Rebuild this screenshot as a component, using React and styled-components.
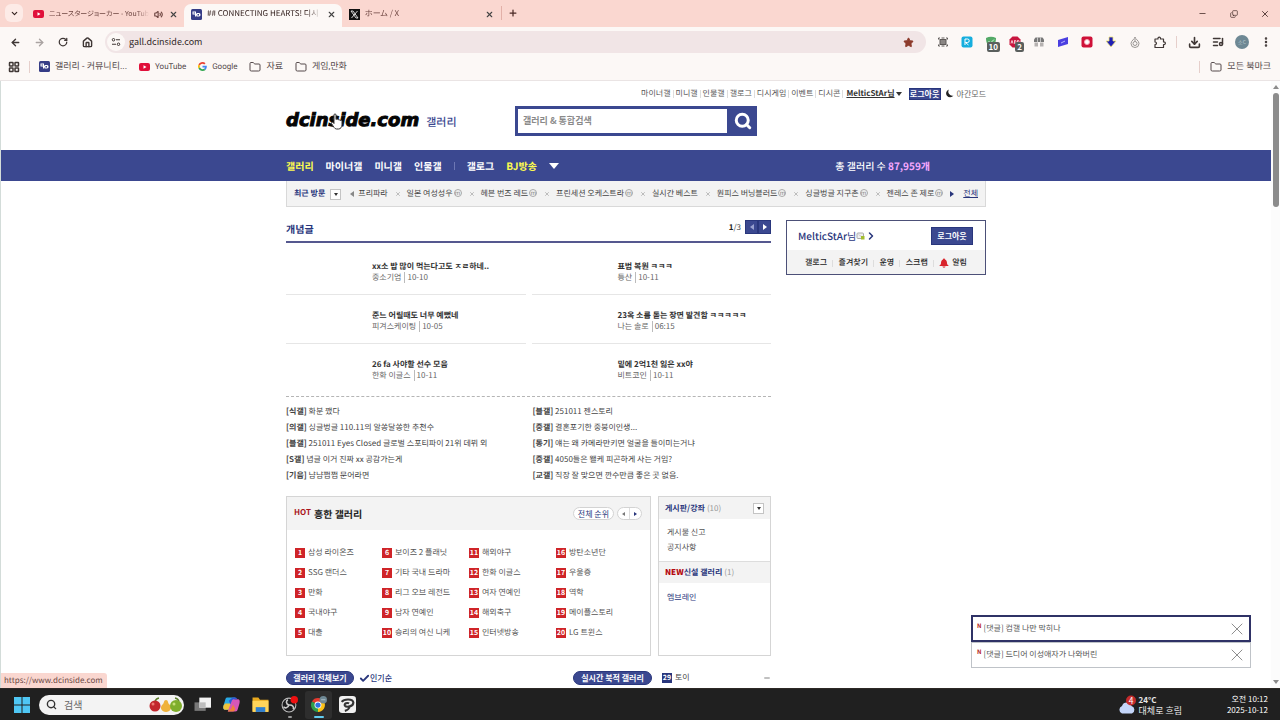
import React from "react";
import styled, { createGlobalStyle, css } from "styled-components";
import { ArrowLeft, ArrowRight, RotateCw, House, Star, Download, ListMusic, Folder, Search, X, Plus, Minus, ChevronDown, ChevronRight, Volume2, EllipsisVertical, Copy, LayoutGrid, Check } from "lucide-react";

const GlobalStyle = createGlobalStyle`
  * { box-sizing: border-box; }
  body { margin: 0; background: #fff; text-rendering: geometricPrecision; }
  body, button, input { font-family: "Noto Sans CJK KR", "Noto Sans", sans-serif; font-size: 8px; line-height: 12px; color: #444; }
  button { margin: 0; padding: 0; border: 0; background: none; cursor: pointer; }
  a { color: inherit; text-decoration: none; }
  ul, ol { list-style: none; margin: 0; padding: 0; }
  h1, h2, h3, p { margin: 0; font-size: inherit; }
  svg { display: block; flex: none; }
`;

const navy = "#3b4890";
const ink = "#29367c";

const Screen = styled.div`
  height: 100vh;
  display: flex;
  flex-direction: column;
  overflow: hidden;
`;

/* Browser window frame */
const TabStrip = styled.div`
  flex: none;
  height: 27px;
  display: flex;
  align-items: flex-end;
  padding-left: 5px;
  background: #fad7d0;
  color: #5a302c;
`;
const TabMenu = styled.button`
  width: 18px;
  height: 18px;
  margin: 0 3px 5px 0;
  border-radius: 6px;
  background: #fdebe7;
  display: grid;
  place-items: center;
  color: #32201e;
`;
const Tab = styled.div`
  width: 158px;
  height: 23px;
  padding: 0 6px 3px 7px;
  display: flex;
  align-items: center;
  gap: 5px;
  border-radius: 7px 7px 0 0;
  background: ${(p) => (p.$active ? "#fcf8f6" : "transparent")};
  color: ${(p) => (p.$active ? "#33201e" : "#6d4540")};
`;
const TabTitle = styled.span`
  flex: 1;
  min-width: 0;
  overflow: hidden;
  white-space: nowrap;
  font-size: ${(p) => (p.$long ? 7 : 8)}px;
  font-family: "Noto Sans CJK JP", "Noto Sans CJK KR", sans-serif;
  font-feature-settings: "palt";
  mask-image: linear-gradient(90deg, #000 88%, transparent);
`;
const TabButton = styled.button`
  display: grid;
  place-items: center;
  width: 10px;
  height: 12px;
`;
const NewTab = styled.button`
  width: 23px;
  height: 14px;
  margin: 0 0 7px 1px;
  border-left: 1px solid #e2b0a8;
  display: grid;
  place-items: center;
  color: #4a2a26;
`;
const WindowButtons = styled.div`
  margin-left: auto;
  height: 27px;
  display: flex;
`;
const WindowButton = styled.button`
  width: 31px;
  display: grid;
  place-items: center;
  color: #3d2522;
`;
const Toolbar = styled.div`
  flex: none;
  height: 30px;
  display: flex;
  align-items: center;
  padding: 0 2px 0 3px;
  background: #fcf8f6;
`;
const ToolButton = styled.button`
  position: relative;
  width: 24px;
  height: 24px;
  display: grid;
  place-items: center;
  color: ${(p) => (p.$dim ? "#aaa3a2" : "#3f3735")};
`;
const CountBadge = styled.span`
  position: absolute;
  right: 3px;
  bottom: 2px;
  padding: 0 2px;
  border-radius: 2px;
  background: #5a5f5d;
  color: #fff;
  font-size: 8px;
  font-weight: 700;
  line-height: 10px;
`;
const AddressBar = styled.label`
  flex: 1;
  height: 22px;
  margin: 0 5px 0 6px;
  padding: 0 12px 0 2px;
  display: flex;
  align-items: center;
  gap: 4px;
  border-radius: 11px;
  background: #f1e5e6;
`;
const SiteInfo = styled.span`
  width: 18px;
  height: 18px;
  border-radius: 9px;
  background: #fcf8f6;
  display: grid;
  place-items: center;
`;
const AddressInput = styled.input`
  flex: 1;
  min-width: 0;
  border: 0;
  outline: 0;
  padding: 0;
  background: transparent;
  font-size: 9px;
  color: #33292a;
`;
const ThinBar = styled.span`
  flex: none;
  width: 1px;
  height: ${(p) => p.$h || 12}px;
  margin: 0 ${(p) => p.$gap || 5}px;
  background: ${(p) => p.$color || "#e6cfcb"};
`;
const Avatar = styled.span`
  width: 14px;
  height: 14px;
  border-radius: 7px;
  background: #6e8894;
  color: #b9c9d1;
  font-size: 5px;
  line-height: 14px;
  text-align: center;
`;
const Bookmarks = styled.nav`
  flex: none;
  height: 24px;
  display: flex;
  align-items: center;
  padding: 0 9px 4px 8px;
  background: #fcf8f6;
  border-bottom: 1px solid #eae4e4;
`;
const Bookmark = styled.a`
  display: flex;
  align-items: center;
  gap: 5px;
  margin-right: 12px;
  font-family: Roboto, "Noto Sans CJK KR", sans-serif;
  font-size: ${(p) => (p.$latin ? 8 : 9)}px;
  color: #54494a;
  white-space: nowrap;
  &:last-child { margin-right: 0; }
`;
const Spacer = styled.span`
  flex: 1;
`;

/* Page area with its scrollbar */
const Viewport = styled.div`
  position: relative;
  flex: 1;
  min-height: 0;
  display: flex;
  border-left: 1px solid #d3dcd9;
`;
const Page = styled.div`
  flex: 1;
  min-width: 0;
  overflow: hidden;
`;
const ScrollTrack = styled.div`
  width: 9px;
  flex: none;
  padding: 4px 0;
  display: flex;
  flex-direction: column;
  align-items: center;
  background: #fcfcfc;
`;
const ScrollThumb = styled.span`
  width: 6px;
  height: 19%;
  margin: 4px 0 auto;
  border-radius: 3px;
  background: #8b8b8b;
`;
const Arrow = styled.span`
  width: 0;
  height: 0;
  flex: none;
  border: ${(p) => p.$size || 3}px solid transparent;
  ${(p) => {
    const c = p.$color || "#333";
    const s = (p.$size || 3) + 1;
    if (p.$dir === "up") return css`border-bottom: ${s}px solid ${c}; border-top: 0;`;
    if (p.$dir === "left") return css`border-right: ${s}px solid ${c}; border-left: 0;`;
    if (p.$dir === "right") return css`border-left: ${s}px solid ${c}; border-right: 0;`;
    return css`border-top: ${s}px solid ${c}; border-bottom: 0;`;
  }}
`;
const Container = styled.div`
  width: 700px;
  max-width: 100%;
  margin: 0 auto;
`;
const UtilityLinks = styled.nav`
  height: 25px;
  display: flex;
  align-items: center;
  justify-content: flex-end;
  color: #555;
  white-space: nowrap;
`;
const UtilityLink = styled.a`
  &:not(:first-child) { border-left: 1px solid #ddd; padding-left: 2px; }
  padding-right: 2px;
  line-height: 8px;
`;
const UserName = styled.a`
  font-weight: 700;
  text-decoration: underline;
  color: #333;
  padding: 0 1px 0 3px;
  border-left: 1px solid #ddd;
  line-height: 8px;
`;
const LogoutButton = styled.button`
  background: ${navy};
  color: #fff;
  font-weight: 700;
  border: 1px solid ${ink};
  width: ${(p) => (p.$large ? 42 : 32)}px;
  height: ${(p) => (p.$large ? 18 : 12)}px;
  line-height: 10px;
`;
const NightMode = styled.button`
  display: flex;
  align-items: center;
  gap: 3px;
  color: #666;
`;
const Masthead = styled.header`
  height: 44px;
  padding-bottom: 14px;
  display: flex;
  align-items: center;
`;
const Brand = styled.h1`
  position: relative;
  width: 229px;
  display: flex;
  align-items: center;
  gap: 7px;
`;
const Wordmark = styled.a`
  font: italic 700 18px/20px "DejaVu Sans", sans-serif;
  color: #050505;
  -webkit-text-stroke: 1px #050505;
`;
const BrandSection = styled.a`
  font-size: 11px;
  line-height: 16px;
  font-weight: 500;
  color: ${navy};
  padding-top: 2px;
`;
const Pointer = styled.svg`
  position: absolute;
  left: 44px;
  top: 2px;
`;
const SearchForm = styled.form`
  display: flex;
  width: 242px;
  height: 30px;
`;
const SearchInput = styled.input`
  flex: 1;
  min-width: 0;
  border: 3px solid ${navy};
  border-right-width: 1px;
  padding: 0 5px;
  font-size: 9px;
  font-weight: 700;
  outline: 0;
  &::placeholder { color: #8a8a8a; opacity: 1; }
`;
const SearchButton = styled.button`
  width: 29px;
  background: ${navy};
  color: #fff;
  display: grid;
  place-items: center;
`;
const MainNav = styled.nav`
  background: ${navy};
  color: #fff;
`;
const NavRow = styled(Container)`
  height: 31px;
  display: flex;
  align-items: center;
  gap: 12px;
  font-size: 10px;
  font-weight: 700;
`;
const NavLink = styled.a`
  color: ${(p) => (p.$on ? "#fdfb4f" : "#fff")};
`;
const GalleryTotal = styled.p`
  margin: 0 56px 0 auto;
  font-size: 10px;
  font-weight: 500;
  strong { color: #f7a8ff; font-weight: 700; }
`;
const RecentBar = styled(Container)`
  height: 26px;
  display: flex;
  align-items: center;
  padding: 1px 7px 0;
  background: #f3f3f3;
  border: 1px solid #d9d9d9;
  border-top: 0;
  white-space: nowrap;
`;
const RecentTitle = styled.h2`
  color: ${ink};
`;
const DropButton = styled.button`
  width: 11px;
  height: 11px;
  border: 1px solid #c4c4c4;
  background: #fff;
  display: grid;
  place-items: center;
  margin: 0 9px 0 5px;
`;
const RecentList = styled.ul`
  flex: 1;
  min-width: 0;
  display: flex;
  justify-content: space-between;
  margin: 0 7px 0 4px;
`;
const RecentItem = styled.li`
  display: flex;
  align-items: center;
`;
const MinorMark = styled.sup`
  width: 8px;
  height: 8px;
  margin: -3px 0 0 1px;
  border: 1px solid #aaa;
  border-radius: 4px;
  font-size: 6px;
  line-height: 5px;
  text-align: center;
  color: #888;
`;
const RemoveButton = styled.button`
  color: #aaa;
  margin-left: 7px;
`;
const AllLink = styled.a`
  margin-left: 9px;
  text-decoration: underline;
  color: ${ink};
`;
const Body = styled(Container)`
  display: flex;
  align-items: flex-start;
  gap: 15px;
  padding-top: 13px;
`;
const MainColumn = styled.main`
  flex: 1;
  min-width: 0;
`;
const SectionHead = styled.div`
  display: flex;
  height: 23px;
  border-bottom: 2px solid #55588f;
`;
const SectionTitle = styled.h2`
  flex: 1;
  padding-top: 2px;
  font-size: 10px;
  line-height: 14px;
  color: ${ink};
`;
const PageCount = styled.span`
  line-height: 15px;
  margin-right: 4px;
  strong { color: #222; }
`;
const PagerButton = styled.button`
  width: 13px;
  height: 14px;
  background: ${navy};
  border: 1px solid ${ink};
  display: grid;
  place-items: center;
`;
const Featured = styled.ul`
  display: grid;
  grid-template-columns: 1fr 1fr;
  column-gap: 6px;
  padding: 3px 0;
  border-bottom: 1px dashed #b5b5b5;
`;
const FeaturedItem = styled.li`
  height: 49px;
  padding: 15px 0 0 86px;
  border-bottom: 1px solid #e6e6e6;
  &:nth-last-child(-n + 2) { border-bottom: 0; }
`;
const FeaturedTitle = styled.a`
  display: block;
  font-weight: 700;
  line-height: 11px;
  color: #333;
  white-space: nowrap;
`;
const FeaturedMeta = styled.p`
  line-height: 12px;
  color: #666;
  span { border-left: 1px solid #bbb; margin-left: 3px; padding-left: 2px; line-height: 8px; }
`;
const Posts = styled.ul`
  display: grid;
  grid-template-columns: 1fr 1fr;
  column-gap: 8px;
  padding-top: 7px;
  line-height: 16px;
  white-space: nowrap;
`;
const Boxes = styled.div`
  display: flex;
  gap: 7px;
  margin-top: 12px;
`;
const Box = styled.section`
  border: 1px solid #d5d5d5;
  height: 160px;
  ${(p) => (p.$narrow ? css`width: 113px;` : css`flex: 1;`)}
`;
const HotHead = styled.div`
  height: 33px;
  padding: 0 8px 0 7px;
  display: flex;
  align-items: center;
  background: #f3f3f3;
`;
const HotTag = styled.span`
  color: #a9151b;
  font-weight: 700;
  margin-right: 3px;
  padding-bottom: 2px;
`;
const HotTitle = styled.h2`
  flex: 1;
  font-size: 10px;
  color: #222;
`;
const RoundButton = styled.button`
  height: 13px;
  border: 1px solid #d3d3d3;
  border-radius: 7px;
  background: #fff;
  color: ${ink};
  padding: 0 4px;
  line-height: 11px;
`;
const RoundPager = styled.div`
  display: flex;
  width: 25px;
  height: 13px;
  margin-left: 3px;
  border: 1px solid #d3d3d3;
  border-radius: 7px;
  background: #fff;
  button { flex: 1; display: grid; place-items: center; }
  button + button { border-left: 1px solid #ddd; }
`;
const HotList = styled.ol`
  display: grid;
  grid-template: repeat(5, 20px) / repeat(4, 1fr);
  grid-auto-flow: column;
  padding: 13px 7px 0 8px;
  white-space: nowrap;
`;
const HotItem = styled.li`
  display: flex;
  align-items: center;
  gap: 3px;
  color: #555;
`;
const Rank = styled.span`
  width: 10px;
  height: 10px;
  background: ${(p) => (p.$blue ? ink : "#cf2428")};
  color: #fff;
  font: 700 7px/10px "Noto Sans CJK KR", sans-serif;
  text-align: center;
`;
const SideHead = styled.div`
  height: 22px;
  padding: 1px 6px 0;
  display: flex;
  align-items: center;
  background: #f3f3f3;
  color: #999;
  ${(p) => p.$line && css`border-top: 1px solid #ddd;`}
  h3 { color: ${ink}; margin-right: 2px; }
  button { margin: 0 0 0 auto; }
`;
const NewTag = styled.span`
  color: #b5090f;
  font-weight: 900;
`;
const SideLinks = styled.ul`
  padding: ${(p) => p.$pad || 6}px 8px;
  height: ${(p) => (p.$pad ? 40 : 42)}px;
  line-height: 15px;
  color: ${(p) => (p.$pad ? ink : "#555")};
`;
const BottomRow = styled.div`
  display: flex;
  align-items: center;
  margin-top: 15px;
  height: 14px;
`;
const Pill = styled.button`
  height: 14px;
  width: ${(p) => (p.$wide ? 79 : 68)}px;
  border-radius: 7px;
  background: ${navy};
  border: 1px solid ${ink};
  color: #fff;
  font-weight: 700;
  line-height: 12px;
`;
const SortButton = styled.button`
  display: flex;
  align-items: center;
  margin: 0 auto 0 5px;
  font-weight: 500;
  color: ${ink};
`;
const LiveItem = styled.a`
  display: flex;
  align-items: center;
  gap: 3px;
  width: 109px;
  margin-left: 10px;
`;
const LoginCard = styled.aside`
  width: 200px;
  border: 1px solid #4c5078;
`;
const LoginTop = styled.div`
  height: 29px;
  padding: 0 12px 0 11px;
  display: flex;
  align-items: center;
  font-size: 10px;
  color: ${ink};
  strong { font-weight: 500; }
  button { margin-left: auto; }
`;
const LoginLinks = styled.nav`
  height: 24px;
  padding: 2px 18px 0;
  display: flex;
  align-items: center;
  justify-content: space-between;
  background: #f3f3f3;
  font-weight: 500;
  color: #222;
  a { display: flex; align-items: center; gap: 3px; }
`;
const Notices = styled.div`
  position: absolute;
  right: 29px;
  bottom: 20px;
  width: 280px;
`;
const Notice = styled.div`
  height: ${(p) => (p.$on ? 27 : 26)}px;
  display: flex;
  align-items: center;
  padding: 0 ${(p) => (p.$on ? 2 : 3)}px 0 ${(p) => (p.$on ? 4 : 5)}px;
  background: #fff;
  border: ${(p) => (p.$on ? "2px solid #2f3266" : "1px solid #bfc3c8")};
  color: #555;
  span { flex: 1; }
  button { color: #777; }
`;
const NoticeMark = styled.b`
  color: #b3151b;
  font-size: 6px;
  line-height: 12px;
  align-self: flex-start;
  margin: 3px 2px 0 0;
`;
const StatusUrl = styled.div`
  position: absolute;
  left: 0;
  bottom: 0;
  height: 15px;
  padding: 0 4px 0 3px;
  font: 8px/15px "Noto Sans CJK KR", sans-serif;
  color: #6b4743;
  background: #fad7d0;
  border-radius: 0 3px 0 0;
`;

/* Desktop taskbar */
const Taskbar = styled.footer`
  flex: none;
  height: 32px;
  display: flex;
  align-items: center;
  padding: 0 12px 0 14px;
  background: #202020;
  border-top: 1px solid #2d2926;
  color: #fff;
`;
const TaskSearch = styled.label`
  width: 145px;
  height: 20px;
  margin: 0 5px 0 9px;
  padding: 0 1px 0 7px;
  display: flex;
  align-items: center;
  gap: 7px;
  border-radius: 10px;
  background: #f3f3f3;
  color: #333;
  input { flex: 1; min-width: 0; border: 0; outline: 0; background: none; font-size: 10px; padding: 0; }
  input::placeholder { color: #666; opacity: 1; }
`;
const TaskButton = styled.button`
  position: relative;
  width: 27px;
  height: 28px;
  margin-right: 2px;
  display: grid;
  place-items: center;
  border-radius: 3px;
  background: ${(p) => (p.$active ? "#2e2e2e" : "transparent")};
  &::after {
    content: "";
    position: absolute;
    bottom: 1px;
    left: 50%;
    transform: translateX(-50%);
    width: ${(p) => (p.$active ? 10 : 4)}px;
    height: 2px;
    border-radius: 1px;
    background: ${(p) => (p.$active ? "#61cdf2" : p.$open ? "#999" : "transparent")};
  }
`;
const Weather = styled.button`
  margin-left: auto;
  display: flex;
  align-items: center;
  gap: 3px;
  font-size: 9px;
  text-align: left;
  color: #e8e8e8;
`;
const WeatherText = styled.span`
  display: grid;
  line-height: 11px;
  b { font-size: 8px; }
`;
const Clock = styled.time`
  width: 86px;
  font-size: 8px;
  line-height: 11px;
  text-align: right;
`;

function YouTubeIcon() {
  return (
    <svg width="11" height="8" viewBox="0 0 22 16"><rect width="22" height="16" rx="4" fill="#e0103a" /><path d="M9 4.500v7l6-3.500z" fill="#fff" /></svg>
  );
}
function DcIcon() {
  return (
    <svg width="11" height="11" viewBox="0 0 22 22">
      <rect width="22" height="22" rx="3" fill="#353c86" />
      <path d="M3 5h7v10H8v-4H3zM11 8h5c4 0 4 7 0 7h-5v-2h-1v-3h1z" fill="#fff" />
      <path d="M5 7h3v2H5zM13 10h3v3h-3z" fill="#353c86" />
    </svg>
  );
}
function GoogleIcon() {
  return (
    <svg width="9" height="9" viewBox="0 0 48 48">
      <path fill="#EA4335" d="M24 9.500c3.540 0 6.710 1.220 9.210 3.600l6.850-6.850C35.900 2.380 30.470 0 24 0 14.620 0 6.510 5.380 2.560 13.220l7.980 6.190C12.430 13.720 17.740 9.500 24 9.500z" />
      <path fill="#4285F4" d="M46.980 24.550c0-1.570-.15-3.090-.38-4.550H24v9.020h12.940c-.58 2.960-2.260 5.480-4.780 7.180l7.730 6c4.510-4.180 7.090-10.360 7.090-17.650z" />
      <path fill="#FBBC05" d="M10.530 28.590A14.500 14.500 0 0 1 9.770 24c0-1.600.27-3.140.76-4.590l-7.980-6.190A23.900 23.900 0 0 0 0 24c0 3.880.92 7.540 2.560 10.780z" />
      <path fill="#34A853" d="M24 48c6.480 0 11.930-2.130 15.890-5.810l-7.730-6C30.010 37.640 27.240 38.500 24 38.500c-6.260 0-11.570-4.220-13.470-9.910l-7.980 6.190C6.510 42.620 14.620 48 24 48z" />
    </svg>
  );
}
function XLogo() {
  return (
    <svg width="11" height="11" viewBox="0 0 22 22"><rect width="22" height="22" fill="#111" /><path d="M4 4h4l10 14h-4zM17 4 5 18" fill="none" stroke="#fff" strokeWidth="1.600" /></svg>
  );
}
function TuneIcon() {
  return (
    <svg width="10" height="10" viewBox="0 0 20 20" fill="none" stroke="#3f3735" strokeWidth="2">
      <circle cx="5" cy="5.500" r="2.500" /><path d="M10 5.500h8M2 14.500h8" /><circle cx="15" cy="14.500" r="2.500" />
    </svg>
  );
}
function PuzzleIcon() {
  return (
    <svg width="13" height="13" viewBox="0 0 26 26" fill="none" stroke="#3f3735" strokeWidth="2.400" strokeLinejoin="round">
      <path d="M4 6h6c-1-5 6-5 5 0h6v6c5-1 5 6 0 5v6H4v-6c4 0 4-5 0-5z" />
    </svg>
  );
}
function BellIcon() {
  return (
    <svg width="10" height="10" viewBox="0 0 20 20" fill="#d8232b">
      <path d="M10 1c1 0 2 1 2 2 3 1 4 4 4 7 0 2 1 4 3 5v1H1v-1c2-1 3-3 3-5 0-3 1-6 4-7 0-1 1-2 2-2zM7 17h6c0 3-6 3-6 0z" />
    </svg>
  );
}
function Moon() {
  return <svg width="8" height="9" viewBox="0 0 16 18"><path d="M6 1a8 8 0 1 0 9 12A8 8 0 0 1 6 1z" fill="#222" /></svg>;
}
function ExtensionIcon({ name }) {
  const art = {
    capture: (
      <g fill="none" stroke="#5d5957" strokeWidth="2">
        <path d="M3 7V4h3M18 4h3v3M3 17v3h3M21 17v3h-3" /><rect x="6" y="7" width="12" height="10" fill="#b8b4b2" /><path d="M6 10h12M6 14h12M9 4h6M9 20h6" />
      </g>
    ),
    reader: (
      <g><rect x="1" y="1" width="22" height="22" rx="4" fill="#16aede" /><path d="M8 18V6h5a3 3 0 0 1 0 7H9l6 5" fill="none" stroke="#fff" strokeWidth="2" /></g>
    ),
    shield: (
      <g><path d="M2 4q10-5 20 0c0 10-3 14-10 19C5 18 2 14 2 4z" fill="#53a966" /><path d="m7 10 4 4 7-7" fill="none" stroke="#d8f0dc" strokeWidth="2" /></g>
    ),
    blocker: (
      <g><path d="M7 1h10l6 6v10l-6 6H7l-6-6V7z" fill="#c8163f" /><path d="m4 15 2-6 2 6M11 9v6h2q3-2 0-3 3-1 0-3zM17 9v6h2q3-2 0-3 3-1 0-3z" fill="none" stroke="#fff" strokeWidth="1.500" /></g>
    ),
    box: (
      <g><path d="M5 3h14l3 4v5H2V7z" fill="#777" /><path d="M3 13h7v8H3zM14 13h7v8h-7z" fill="#b6b2b1" /><path d="M9 3v9M15 3v9" stroke="#ddd" strokeWidth="1.500" /></g>
    ),
    slash: (
      <g><path d="M2 8 22 2v14L2 22z" fill="#4b3fe0" /><path d="m8 14 8-4" stroke="#b9b4ff" strokeWidth="2" /></g>
    ),
    record: (
      <g><rect x="1" y="1" width="22" height="22" rx="4" fill="#cf1138" /><circle cx="12" cy="12" r="5" fill="#fff" stroke="#f7a9b7" strokeWidth="2" /></g>
    ),
    down: <path d="M8 2h8v8h6L12 22 2 10h6z" fill="#2020b4" stroke="#f2e76d" strokeWidth="1.500" />,
    flame: (
      <g fill="none" stroke="#999593" strokeWidth="2"><path d="M12 2c0 4-8 7-8 13a8 8 0 0 0 16 0c0-6-8-9-8-13zM12 6v6" /><circle cx="12" cy="15" r="4" /></g>
    ),
  }[name];
  return <svg width="12" height="12" viewBox="0 0 24 24">{art}</svg>;
}
function WindowsLogo() {
  return (
    <svg width="16" height="16" viewBox="0 0 16 16"><path d="M0 0h7.500v7.500H0zM8.500 0H16v7.500H8.500zM0 8.500h7.500V16H0zM8.500 8.500H16V16H8.500z" fill="#4fc7f4" /></svg>
  );
}
function Fruits() {
  return (
    <svg width="34" height="16" viewBox="0 0 68 32">
      <path d="M12 9Q14 3 20 2M60 9q-2-6-8-7" stroke="#5b7d2a" strokeWidth="3" fill="none" />
      <circle cx="12" cy="18" r="11" fill="#c2272d" /><circle cx="8" cy="14" r="3" fill="#ec7a72" />
      <path d="M34 6c5 0 3 6 7 9 7 7 1 15-7 15s-14-8-7-15c4-3 2-9 7-9z" fill="#efb23b" />
      <circle cx="54" cy="18" r="12" fill="#7fae2c" /><circle cx="50" cy="14" r="3" fill="#c6df78" />
    </svg>
  );
}
function TaskIcon({ name }) {
  const art = {
    view: <g><rect x="1" y="12" width="21" height="16" fill="#777" /><rect x="10" y="3" width="22" height="19" fill="#f2f2f2" /><rect x="10" y="12" width="12" height="10" fill="#bdbdbd" /></g>,
    copilot: (
      <g>
        <path d="M9 3h14L16 22c-1 3-2 4-5 4H5c-5 0-5-4-4-8L4 8c1-4 2-5 5-5z" fill="#28a9e6" />
        <path d="M4 14h12l-3 9c-1 2-2 3-5 3H5c-5 0-5-4-4-8z" fill="#f0c23a" />
        <path d="M23 29H9l7-19c1-3 2-4 5-4h6c5 0 5 4 4 8l-3 10c-1 4-2 5-5 5z" fill="#d757b8" />
        <path d="M18 3h5c2 0 3 1 4 3h-6c-3 0-4 1-5 4l-2 6-3-7z" fill="#3357d6" />
        <path d="M11 26c2 0 4-1 5-4l3-6 4 8c-1 4-2 5-4 5H9z" fill="#f0803c" />
      </g>
    ),
    files: <g><path d="M1 3h11l3 4h16v22H1z" fill="#e8a91e" /><path d="M1 9h30v21H1z" fill="#ffd45a" /><path d="M7 21h18v9H7z" fill="#2e7fd0" /></g>,
    obs: (
      <g><circle cx="15" cy="17" r="13" fill="#1b1b1d" stroke="#bbb" strokeWidth="2" /><path d="M15 17c-6-2-6-8-2-10M15 17c7-1 10 4 8 8M15 17c-2 6-8 7-10 3" fill="none" stroke="#ccc" strokeWidth="3" /><circle cx="25" cy="7" r="7" fill="#ef1010" /></g>
    ),
    chrome: (
      <g>
        <path d="M15 17 3.700 10.500A13 13 0 0 1 26.300 10.500z" fill="#e53a2f" /><path d="M15 17 26.300 10.500A13 13 0 0 1 15 30z" fill="#fbc116" /><path d="M15 17v13A13 13 0 0 1 3.700 10.500z" fill="#2f9e4b" />
        <circle cx="15" cy="17" r="6.500" fill="#fff" /><circle cx="15" cy="17" r="5" fill="#2f73e0" /><circle cx="25" cy="7" r="7" fill="#6e8894" /><path d="M21 7h8" stroke="#a9bac3" strokeWidth="2" />
      </g>
    ),
    paint: (
      <g><rect width="32" height="32" rx="6" fill="#f0f0f0" /><path d="M5 11c5-6 21-6 22 1 0 8-13 10-16 6-2-4 5-6 8-4M20 19c0 4-4 8-9 9" fill="none" stroke="#333" strokeWidth="4" /></g>
    ),
  }[name];
  return <svg width="17" height="17" viewBox="0 0 32 32">{art}</svg>;
}

const utility = ["마이너갤", "미니갤", "인물갤", "갤로그", "디시게임", "이벤트", "디시콘"];
const recent = [
  ["프리파라"], ["일본 여성성우", 1], ["헤븐 번즈 레드", 1], ["프린세션 오케스트라", 1],
  ["실시간 베스트"], ["원피스 버닝블러드", 1], ["싱글벙글 지구촌", 1], ["젠레스 존 제로", 1],
];
const featured = [
  ["xx소 밥 많이 먹는다고도 ㅈㄹ하네..", "중소기업", "10-10"],
  ["표범 복원 ㅋㅋㅋ", "등산", "10-11"],
  ["준느 어릴때도 너무 예뻤네", "피겨스케이팅", "10-05"],
  ["23옥 소름 돋는 장면 발견함 ㅋㅋㅋㅋㅋ", "나는 솔로", "06:15"],
  ["26 fa 사야할 선수 모음", "한화 이글스", "10-11"],
  ["밑에 2억1천 잃은 xx야", "비트코인", "10-11"],
];
const posts = [
  ["식갤", "화분 깼다"], ["블갤", "251011 젠스토리"],
  ["의갤", "싱글벙글 110.11의 알쏭달쏭한 추천수"], ["중갤", "결혼포기한 중붕이인생..."],
  ["블갤", "251011 Eyes Closed 글로벌 스포티파이 21위 데뷔 외"], ["동기", "얘는 왜 카메라만키면 얼굴을 들이미는거냐"],
  ["S갤", "념글 이거 진짜 xx 공감가는게"], ["중갤", "4050들은 왤케 피곤하게 사는 거임?"],
  ["기음", "냠냠쩝쩝 문어라면"], ["교갤", "직장 잘 맞으면 깐수만큼 좋은 곳 없음."],
];
const hot = [
  "삼성 라이온즈", "SSG 랜더스", "만화", "국내야구", "대출",
  "보이즈 2 플래닛", "기타 국내 드라마", "리그 오브 레전드", "남자 연예인", "승리의 여신 니케",
  "해외야구", "한화 이글스", "여자 연예인", "해외축구", "인터넷방송",
  "방탄소년단", "우울증", "역학", "메이플스토리", "LG 트윈스",
];

function Browser() {
  return (
    <>
      <TabStrip>
        <TabMenu aria-label="탭 검색"><ChevronDown size={9} strokeWidth={3} /></TabMenu>
        <Tab>
          <YouTubeIcon />
          <TabTitle $long>ニュースタージョーカー - YouTube</TabTitle>
          <Volume2 size={9} strokeWidth={3} />
          <TabButton aria-label="탭 닫기"><X size={9} strokeWidth={3} /></TabButton>
        </Tab>
        <Tab $active>
          <DcIcon />
          <TabTitle>## CONNECTING HEARTS! 디시</TabTitle>
          <TabButton aria-label="탭 닫기"><X size={9} strokeWidth={3} /></TabButton>
        </Tab>
        <Tab>
          <XLogo />
          <TabTitle>ホーム / X</TabTitle>
          <TabButton aria-label="탭 닫기"><X size={9} strokeWidth={3} /></TabButton>
        </Tab>
        <NewTab aria-label="새 탭"><Plus size={10} strokeWidth={3} /></NewTab>
        <WindowButtons>
          <WindowButton aria-label="최소화"><Minus size={9} /></WindowButton>
          <WindowButton aria-label="이전 크기"><Copy size={8} style={{ transform: "scaleY(-1)" }} /></WindowButton>
          <WindowButton aria-label="닫기"><X size={10} /></WindowButton>
        </WindowButtons>
      </TabStrip>
      <Toolbar>
        <ToolButton aria-label="뒤로"><ArrowLeft size={11} strokeWidth={3} /></ToolButton>
        <ToolButton $dim aria-label="앞으로"><ArrowRight size={11} strokeWidth={3} /></ToolButton>
        <ToolButton aria-label="새로고침"><RotateCw size={10} strokeWidth={3} /></ToolButton>
        <ToolButton aria-label="홈"><House size={11} strokeWidth={3} /></ToolButton>
        <AddressBar>
          <SiteInfo><TuneIcon /></SiteInfo>
          <AddressInput aria-label="주소" defaultValue="gall.dcinside.com" />
          <Star size={11} fill="#8d3b2c" color="#8d3b2c" />
        </AddressBar>
        <ToolButton aria-label="캡처"><ExtensionIcon name="capture" /></ToolButton>
        <ToolButton aria-label="리더"><ExtensionIcon name="reader" /></ToolButton>
        <ToolButton aria-label="보호"><ExtensionIcon name="shield" /><CountBadge>10</CountBadge></ToolButton>
        <ToolButton aria-label="차단"><ExtensionIcon name="blocker" /><CountBadge>2</CountBadge></ToolButton>
        <ToolButton aria-label="보관함"><ExtensionIcon name="box" /></ToolButton>
        <ToolButton aria-label="메모"><ExtensionIcon name="slash" /></ToolButton>
        <ToolButton aria-label="녹화"><ExtensionIcon name="record" /></ToolButton>
        <ToolButton aria-label="내려받기"><ExtensionIcon name="down" /></ToolButton>
        <ToolButton aria-label="불꽃"><ExtensionIcon name="flame" /></ToolButton>
        <ToolButton aria-label="확장 프로그램"><PuzzleIcon /></ToolButton>
        <ThinBar />
        <ToolButton aria-label="다운로드"><Download size={13} strokeWidth={3} /></ToolButton>
        <ToolButton aria-label="미디어"><ListMusic size={12} strokeWidth={3} /></ToolButton>
        <ToolButton aria-label="프로필"><Avatar>소C</Avatar></ToolButton>
        <ToolButton aria-label="메뉴"><EllipsisVertical size={12} strokeWidth={3} /></ToolButton>
      </Toolbar>
      <Bookmarks>
        <LayoutGrid size={12} color="#3f3735" strokeWidth={3} />
        <ThinBar $gap={9} />
        <Bookmark href="#"><DcIcon />갤러리 - 커뮤니티...</Bookmark>
        <Bookmark $latin href="#"><YouTubeIcon />YouTube</Bookmark>
        <Bookmark $latin href="#"><GoogleIcon />Google</Bookmark>
        <Bookmark href="#"><Folder size={12} />자료</Bookmark>
        <Bookmark href="#"><Folder size={12} />게임,만화</Bookmark>
        <Spacer />
        <ThinBar $gap={10} />
        <Bookmark href="#"><Folder size={12} />모든 북마크</Bookmark>
      </Bookmarks>
    </>
  );
}

function SiteHeader() {
  return (
    <>
      <Container>
        <UtilityLinks>
          {utility.map((t) => <UtilityLink href="#" key={t}>{t}</UtilityLink>)}
          <UserName href="#">MelticStAr님</UserName>
          <Arrow $dir="down" />
          <ThinBar $gap={3} $color="transparent" />
          <LogoutButton>로그아웃</LogoutButton>
          <ThinBar $gap={2} $color="transparent" />
          <NightMode><Moon />야간모드</NightMode>
        </UtilityLinks>
        <Masthead>
          <Brand>
            <Wordmark href="#">dcinside.com</Wordmark>
            <BrandSection href="#">갤러리</BrandSection>
            <Pointer width="13" height="17" viewBox="0 0 26 34">
              <path d="M8 17V4c0-3 4-3 4 0v9c2-2 4-1 4 1 2-2 4 0 4 1 2-1 4 0 4 2v7c0 4-3 8-7 8h-4c-4 0-6-5-10-11-1-3 2-4 5 0z" fill="#fff" stroke="#333" strokeWidth="2" />
            </Pointer>
          </Brand>
          <SearchForm onSubmit={(e) => e.preventDefault()}>
            <SearchInput aria-label="검색어" placeholder="갤러리 & 통합검색" />
            <SearchButton aria-label="검색"><Search size={18} strokeWidth={4} /></SearchButton>
          </SearchForm>
        </Masthead>
      </Container>
      <MainNav>
        <NavRow>
          <NavLink $on href="#">갤러리</NavLink>
          <NavLink href="#">마이너갤</NavLink>
          <NavLink href="#">미니갤</NavLink>
          <NavLink href="#">인물갤</NavLink>
          <ThinBar $h={8} $gap="0" $color="#6d77b4" />
          <NavLink href="#">갤로그</NavLink>
          <NavLink $on href="#">BJ방송</NavLink>
          <Arrow $dir="down" $size={5} $color="#fff" />
          <GalleryTotal>총 갤러리 수 <strong>87,959개</strong></GalleryTotal>
        </NavRow>
      </MainNav>
      <RecentBar>
        <RecentTitle>최근 방문</RecentTitle>
        <DropButton aria-label="최근 방문 열기"><Arrow $dir="down" $size={2} /></DropButton>
        <Arrow $dir="left" $color="#888" />
        <RecentList>
          {recent.map(([t, m], i) => (
            <RecentItem key={t}>
              <a href="#">{t}</a>
              {m && <MinorMark>m</MinorMark>}
              {i < recent.length - 1 && <RemoveButton aria-label={t + " 삭제"}><X size={6} strokeWidth={3} /></RemoveButton>}
            </RecentItem>
          ))}
        </RecentList>
        <Arrow $dir="right" $color={ink} />
        <AllLink href="#">전체</AllLink>
      </RecentBar>
    </>
  );
}

function HotBox() {
  return (
    <Box>
      <HotHead>
        <HotTag>HOT</HotTag>
        <HotTitle>흥한 갤러리</HotTitle>
        <RoundButton>전체 순위</RoundButton>
        <RoundPager>
          <button aria-label="이전"><Arrow $dir="left" $size={2} $color="#777" /></button>
          <button aria-label="다음"><Arrow $dir="right" $size={2} $color={ink} /></button>
        </RoundPager>
      </HotHead>
      <HotList>
        {hot.map((t, i) => <HotItem key={t}><Rank>{i + 1}</Rank><a href="#">{t}</a></HotItem>)}
      </HotList>
    </Box>
  );
}

export default function App() {
  return (
    <Screen>
      <GlobalStyle />
      <Browser />
      <Viewport>
        <Page>
          <SiteHeader />
          <Body>
            <MainColumn>
              <SectionHead>
                <SectionTitle>개념글</SectionTitle>
                <PageCount><strong>1</strong>/3</PageCount>
                <PagerButton aria-label="이전"><Arrow $dir="left" $color="#98a0cf" /></PagerButton>
                <PagerButton aria-label="다음"><Arrow $dir="right" $color="#fff" /></PagerButton>
              </SectionHead>
              <Featured>
                {featured.map(([title, gallery, date]) => (
                  <FeaturedItem key={title}>
                    <FeaturedTitle href="#">{title}</FeaturedTitle>
                    <FeaturedMeta>{gallery}<span>{date}</span></FeaturedMeta>
                  </FeaturedItem>
                ))}
              </Featured>
              <Posts>
                {posts.map(([tag, title]) => (
                  <li key={title}><a href="#"><strong>[{tag}]</strong> {title}</a></li>
                ))}
              </Posts>
              <Boxes>
                <HotBox />
                <Box $narrow>
                  <SideHead>
                    <h3>게시판/강좌</h3>(10)
                    <DropButton aria-label="게시판 열기"><Arrow $dir="down" $size={2} /></DropButton>
                  </SideHead>
                  <SideLinks>
                    <li><a href="#">게시물 신고</a></li>
                    <li><a href="#">공지사항</a></li>
                  </SideLinks>
                  <SideHead $line><NewTag>NEW</NewTag><h3>신설 갤러리</h3>(1)</SideHead>
                  <SideLinks $pad={7}><li><a href="#">엠브레인</a></li></SideLinks>
                </Box>
              </Boxes>
              <BottomRow>
                <Pill>갤러리 전체보기</Pill>
                <SortButton><Check size={11} strokeWidth={4} />인기순</SortButton>
                <Pill $wide>실시간 북적 갤러리</Pill>
                <LiveItem href="#"><Rank $blue>29</Rank>토이<Spacer /><Minus size={8} /></LiveItem>
              </BottomRow>
            </MainColumn>
            <LoginCard>
              <LoginTop>
                <strong>MelticStAr</strong>님
                <svg width="9" height="8" viewBox="0 0 18 16"><rect x="2" y="2" width="13" height="11" rx="2" fill="#eee" stroke="#aaa" strokeWidth="2" /><path d="m5 5 7 5" stroke="#aaa" /><rect x="10" y="8" width="7" height="7" fill="#a3bd2f" /></svg>
                <ChevronRight size={12} strokeWidth={3} />
                <LogoutButton $large>로그아웃</LogoutButton>
              </LoginTop>
              <LoginLinks>
                <a href="#">갤로그</a><ThinBar $h={7} $gap="0" $color="#ddd" />
                <a href="#">즐겨찾기</a><ThinBar $h={7} $gap="0" $color="#ddd" />
                <a href="#">운영</a><ThinBar $h={7} $gap="0" $color="#ddd" />
                <a href="#">스크랩</a><ThinBar $h={7} $gap="0" $color="#ddd" />
                <a href="#"><BellIcon />알림</a>
              </LoginLinks>
            </LoginCard>
          </Body>
        </Page>
        <ScrollTrack>
          <Arrow $dir="up" $color="#8b8b8b" />
          <ScrollThumb />
          <Arrow $dir="down" $color="#8b8b8b" />
        </ScrollTrack>
        <Notices>
          <Notice $on><NoticeMark>N</NoticeMark><span>[댓글] 컴갤 나만 막히나</span><button aria-label="알림 닫기"><X size={20} strokeWidth={1} /></button></Notice>
          <Notice><NoticeMark>N</NoticeMark><span>[댓글] 드디어 이성애자가 나와버린</span><button aria-label="알림 닫기"><X size={20} strokeWidth={1} /></button></Notice>
        </Notices>
        <StatusUrl>https://www.dcinside.com</StatusUrl>
      </Viewport>
      <Taskbar>
        <button aria-label="시작"><WindowsLogo /></button>
        <TaskSearch><Search size={11} strokeWidth={3} /><input aria-label="작업 표시줄 검색" placeholder="검색" /><Fruits /></TaskSearch>
        <TaskButton aria-label="작업 보기"><TaskIcon name="view" /></TaskButton>
        <TaskButton aria-label="코파일럿"><TaskIcon name="copilot" /></TaskButton>
        <TaskButton aria-label="파일 탐색기"><TaskIcon name="files" /></TaskButton>
        <TaskButton $open aria-label="녹화 도구"><TaskIcon name="obs" /></TaskButton>
        <TaskButton $active aria-label="브라우저"><TaskIcon name="chrome" /></TaskButton>
        <TaskButton aria-label="그림 도구"><TaskIcon name="paint" /></TaskButton>
        <Weather>
          <svg width="18" height="20" viewBox="0 0 36 40"><path d="M8 37a8 8 0 0 1 0-15 10 10 0 0 1 19 0 8 8 0 0 1 1 15z" fill="#c4d6fa" /><circle cx="26" cy="11" r="10" fill="#c42b2b" /><text x="26" y="17" fontSize="17" fill="#fff" textAnchor="middle">4</text></svg>
          <WeatherText><b>24°C</b><span>대체로 흐림</span></WeatherText>
        </Weather>
        <Clock>오전 10:12<br />2025-10-12</Clock>
      </Taskbar>
    </Screen>
  );
}
